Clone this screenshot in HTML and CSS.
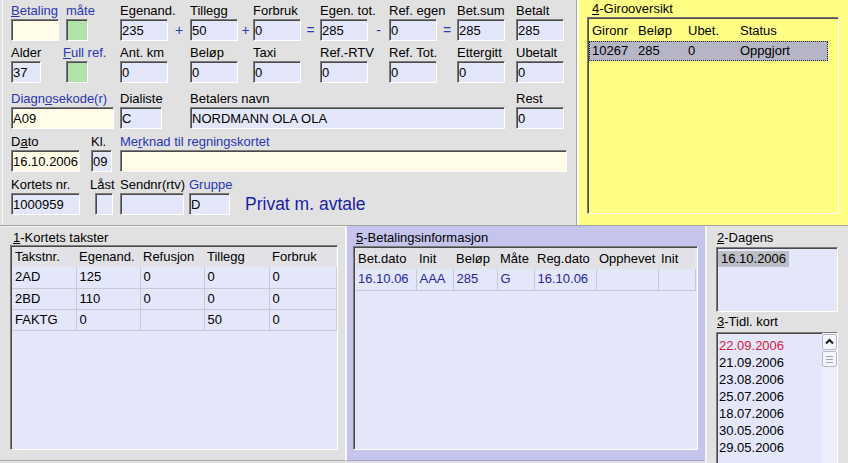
FILE: index.html
```html
<!DOCTYPE html>
<html lang="no">
<head>
<meta charset="utf-8">
<title>Regningskort</title>
<link rel="stylesheet" href="styles.css">
</head>
<body>
<div class="top">
  <div class="form">
    <div class="row r1">
      <div class="fld"><div class="lbl blue"><u>B</u>etaling</div><div class="box yel"></div></div>
      <span></span>
      <div class="fld"><div class="lbl blue">måte</div><div class="box grn"></div></div>
      <span></span>
      <div class="fld"><div class="lbl">Egenand.</div><div class="box">235</div></div>
      <div class="op">+</div>
      <div class="fld"><div class="lbl">Tillegg</div><div class="box">50</div></div>
      <div class="op">+</div>
      <div class="fld"><div class="lbl">Forbruk</div><div class="box">0</div></div>
      <div class="op">=</div>
      <div class="fld"><div class="lbl">Egen. tot.</div><div class="box">285</div></div>
      <div class="op">-</div>
      <div class="fld"><div class="lbl">Ref. egen</div><div class="box">0</div></div>
      <div class="op">=</div>
      <div class="fld"><div class="lbl">Bet.sum</div><div class="box">285</div></div>
      <span></span>
      <div class="fld"><div class="lbl">Betalt</div><div class="box">285</div></div>
    </div>
    <div class="row r2">
      <div class="fld"><div class="lbl">Alder</div><div class="box w30">37</div></div>
      <span></span>
      <div class="fld"><div class="lbl blue shift3"><u>F</u>ull ref.</div><div class="box grn"></div></div>
      <span></span>
      <div class="fld"><div class="lbl">Ant. km</div><div class="box">0</div></div>
      <span></span>
      <div class="fld"><div class="lbl">Beløp</div><div class="box">0</div></div>
      <span></span>
      <div class="fld"><div class="lbl">Taxi</div><div class="box">0</div></div>
      <span></span>
      <div class="fld"><div class="lbl">Ref.-RTV</div><div class="box">0</div></div>
      <span></span>
      <div class="fld"><div class="lbl">Ref. Tot.</div><div class="box">0</div></div>
      <span></span>
      <div class="fld"><div class="lbl">Ettergitt</div><div class="box">0</div></div>
      <span></span>
      <div class="fld"><div class="lbl">Ubetalt</div><div class="box">0</div></div>
    </div>
    <div class="row r3">
      <div class="fld"><div class="lbl blue">Diagn<u>o</u>sekode(r)</div><div class="box yel">A09</div></div>
      <span></span>
      <div class="fld"><div class="lbl">Dialiste</div><div class="box">C</div></div>
      <span></span>
      <div class="fld"><div class="lbl">Betalers navn</div><div class="box">NORDMANN OLA OLA</div></div>
      <span></span>
      <div class="fld"><div class="lbl">Rest</div><div class="box">0</div></div>
    </div>
    <div class="row r4">
      <div class="fld"><div class="lbl">D<u>a</u>to</div><div class="box yel">16.10.2006</div></div>
      <span></span>
      <div class="fld"><div class="lbl">Kl.</div><div class="box">09</div></div>
      <span></span>
      <div class="fld"><div class="lbl blue">Me<u>r</u>knad til regningskortet</div><div class="box yel"></div></div>
    </div>
    <div class="row r5">
      <div class="fld"><div class="lbl">Kortets nr.</div><div class="box">1000959</div></div>
      <span></span>
      <div class="fld"><div class="lbl">Låst</div><div class="box lock"></div></div>
      <span></span>
      <div class="fld"><div class="lbl">Sendnr(rtv)</div><div class="box"></div></div>
      <span></span>
      <div class="fld"><div class="lbl blue">Gruppe</div><div class="box">D</div></div>
      <span></span>
      <div class="privat">Privat m. avtale</div>
    </div>
  </div>
  <div class="giro">
    <div class="ptitle gt"><u>4</u>-Girooversikt</div>
    <div class="glist sunk">
      <div class="grow ghead"><span>Gironr</span><span>Beløp</span><span>Ubet.</span><span>Status</span></div>
      <div class="grow gsel"><span>10267</span><span>285</span><span>0</span><span>Oppgjort</span></div>
    </div>
  </div>
</div>
<div class="bottom">
  <div class="panel p1">
    <div class="ptitle t1"><u>1</u>-Kortets takster</div>
    <div class="list l1 sunk">
      <table class="tbl">
        <colgroup><col class="c64"><col class="c64"><col class="c64"><col class="c65"><col class="c67"></colgroup>
        <tr class="hd"><th>Takstnr.</th><th>Egenand.</th><th>Refusjon</th><th>Tillegg</th><th>Forbruk</th></tr>
        <tr><td>2AD</td><td>125</td><td>0</td><td>0</td><td>0</td></tr>
        <tr><td>2BD</td><td>110</td><td>0</td><td>0</td><td>0</td></tr>
        <tr><td>FAKTG</td><td>0</td><td></td><td>50</td><td>0</td></tr>
      </table>
    </div>
  </div>
  <div class="panel p5">
    <div class="ptitle t5"><u>5</u>-Betalingsinformasjon</div>
    <div class="list l5 sunk">
      <table class="tbl bt">
        <colgroup><col class="c61"><col class="c37"><col class="c44"><col class="c37"><col class="c62"><col class="c62"><col class="c37"></colgroup>
        <tr class="hd h21"><th>Bet.dato</th><th>Init</th><th>Beløp</th><th>Måte</th><th>Reg.dato</th><th>Opphevet</th><th>Init</th></tr>
        <tr><td>16.10.06</td><td>AAA</td><td>285</td><td>G</td><td>16.10.06</td><td></td><td></td></tr>
      </table>
    </div>
  </div>
  <div class="panel side">
    <div class="ptitle ts"><u>2</u>-Dagens</div>
    <div class="list ld sunk">
      <span class="dsel">16.10.2006</span>
    </div>
    <div class="ptitle ts t3"><u>3</u>-Tidl. kort</div>
    <div class="list lt sunk">
      <div class="items">
        <div class="red">22.09.2006</div>
        <div>21.09.2006</div>
        <div>23.08.2006</div>
        <div>25.07.2006</div>
        <div>18.07.2006</div>
        <div>30.05.2006</div>
        <div>29.05.2006</div>
      </div>
      <div class="sb">
        <div class="sbbtn"><svg width="13" height="14" viewBox="0 0 13 14"><path d="M3 8.5 L6.5 5 L10 8.5" fill="none" stroke="#202020" stroke-width="2"/></svg></div>
        <div class="thumb"><i></i><i></i><i></i></div>
      </div>
    </div>
  </div>
</div>
</body>
</html>
```

FILE: styles.css
```css
* { box-sizing: border-box; }
html, body { margin: 0; padding: 0; }
body {
  width: 848px;
  height: 463px;
  overflow: hidden;
  background: #e1e1e1;
  font-family: "Liberation Sans", Arial, sans-serif;
  font-size: 13px;
  color: #000;
}
u { text-decoration: underline; text-underline-offset: 1px; }

.top { display: flex; height: 225px; }
.form {
  width: 577px;
  border-right: 1px solid #a2a2a2;
  box-shadow: inset 2px 0 0 #e1e1e1, inset 3px 0 0 #f6f6f6;
}
.row { display: grid; align-items: end; padding-left: 11px; }
.r1 { margin-top: 3px; grid-template-columns: 48px 7px 22px 32px 48px 22px 48px 15px 48px 19px 48px 21px 48px 20px 48px 11px 48px; }
.r2 { margin-top: 4px; grid-template-columns: 48px 7px 22px 32px 48px 22px 48px 15px 48px 19px 48px 21px 48px 20px 48px 11px 48px; }
.r3 { margin-top: 8px; grid-template-columns: 103px 6px 42px 28px 315px 11px 48px; }
.r4 { margin-top: 5px; grid-template-columns: 69px 11px 21px 8px 447px; }
.r5 { margin-top: 5px; grid-template-columns: 69px 10px 23px 7px 64px 5px 41px 15px auto; }

.fld { display: flex; flex-direction: column; min-width: 0; }
.lbl { height: 16px; line-height: 16px; white-space: nowrap; }
.blue { color: #2a36b4; }
.shift3 { margin-left: -3px; }

.box {
  height: 22px;
  padding: 2px 2px 0 1px;
  line-height: 18px;
  white-space: nowrap;
  overflow: hidden;
  background: #e4e6fa;
  border: 1px solid;
  border-color: #7c7c7c #ffffff #ffffff #7c7c7c;
  box-shadow: inset 1px 1px 0 #4a4a4a;
}
.yel { background: #fffde8; }
.grn { background: #b2e2aa; }
.w30 { width: 30px; }
.lock { margin-left: 5px; }

.op { height: 22px; line-height: 22px; text-align: center; color: #2c3cc0; font-size: 14px; }
.privat { height: 22px; line-height: 22px; font-size: 17.5px; color: #1c1ca8; white-space: nowrap; }

.sunk {
  border: 1px solid;
  border-color: #7c7c7c #ffffff #ffffff #7c7c7c;
  box-shadow: inset 1px 1px 0 #4a4a4a;
}

.giro {
  width: 271px;
  background: #fffe84;
  border-left: 2px solid #fffff2;
  padding: 1px 0 0 8px;
}
.ptitle { height: 15px; line-height: 15px; white-space: nowrap; }
.gt { height: 16px; line-height: 16px; padding-left: 5px; }
.glist { width: 252px; height: 197px; background: #fffe84; padding: 1px 0 0 1px; }
.grow { display: grid; grid-template-columns: 46px 50px 52px 1fr; width: 239px; }
.ghead { height: 22px; padding: 3px 0 0 3px; line-height: 18px; }
.gsel {
  height: 20px;
  line-height: 18px;
  padding-left: 2px;
  background: #b5b5c6;
  border: 1px dotted #222;
}

.bottom { display: flex; height: 238px; border-top: 1px solid #a2a2a2; }
.panel { height: 235px; padding-top: 4px; }
.p1 { width: 345px; padding-left: 10px; border-bottom: 1px solid #b0b0b0; box-shadow: inset 0 1px 0 #f4f4f4; }
.t1 { padding-left: 3px; }
.list { background: #e4e6fa; overflow: hidden; }
.l1 { width: 328px; height: 205px; padding: 1px 0 0 1px; }

.p5 {
  width: 360px;
  padding-left: 6px;
  background: #c4c4ec;
  border-left: 2px solid #f6f6fc;
  border-bottom: 1px solid #a8a8c8;
}
.t5 { padding-left: 3px; }
.l5 { width: 345px; height: 204px; margin-top: 1px; padding: 1px 0 0 1px; }

.tbl { border-collapse: collapse; table-layout: fixed; }
.tbl th, .tbl td { padding: 0 0 0 3px; text-align: left; font-weight: normal; white-space: nowrap; overflow: hidden; }
.tbl th { height: 20px; line-height: 20px; background: #e2e2e6; }
.tbl .h21 th { height: 21px; }
.tbl td { height: 21px; line-height: 20px; border-bottom: 1px solid #c8c9d6; border-right: 1px solid #c8c9d6; }
.bt td { color: #26269a; }
.c64 { width: 64px; }
.c65 { width: 65px; }
.c67 { width: 67px; }
.c61 { width: 61px; }
.c37 { width: 37px; }
.c44 { width: 44px; }
.c62 { width: 62px; }

.side {
  width: 143px;
  height: 237px;
  overflow: hidden;
  padding-left: 9px;
  border-left: 2px solid #f4f4f4;
}
.ts { height: 16px; line-height: 16px; padding-left: 1px; }
.ld { width: 122px; height: 65px; margin-top: 1px; padding: 3px 0 0 1px; }
.dsel { display: inline-block; height: 16px; line-height: 16px; padding: 0 3px; background: #bdbdc6; }
.t3 { margin-top: 2px; }
.lt { width: 122px; height: 160px; margin-top: 2px; display: flex; }
.items { flex: 1; padding: 4px 0 0 2px; }
.items div { height: 17px; line-height: 17px; }
.red { color: #d0203c; }
.sb { width: 15px; display: flex; flex-direction: column; gap: 1px; padding-top: 1px; background: #eceefa; }
.sbbtn, .thumb {
  height: 16px;
  background: #f4f5fb;
  border: 1px solid #b4b8cc;
  border-radius: 2px;
  display: flex;
  align-items: center;
  justify-content: center;
}
.thumb { flex-direction: column; gap: 2px; }
.thumb i { display: block; width: 7px; height: 1px; background: #9ea2b8; }
```
